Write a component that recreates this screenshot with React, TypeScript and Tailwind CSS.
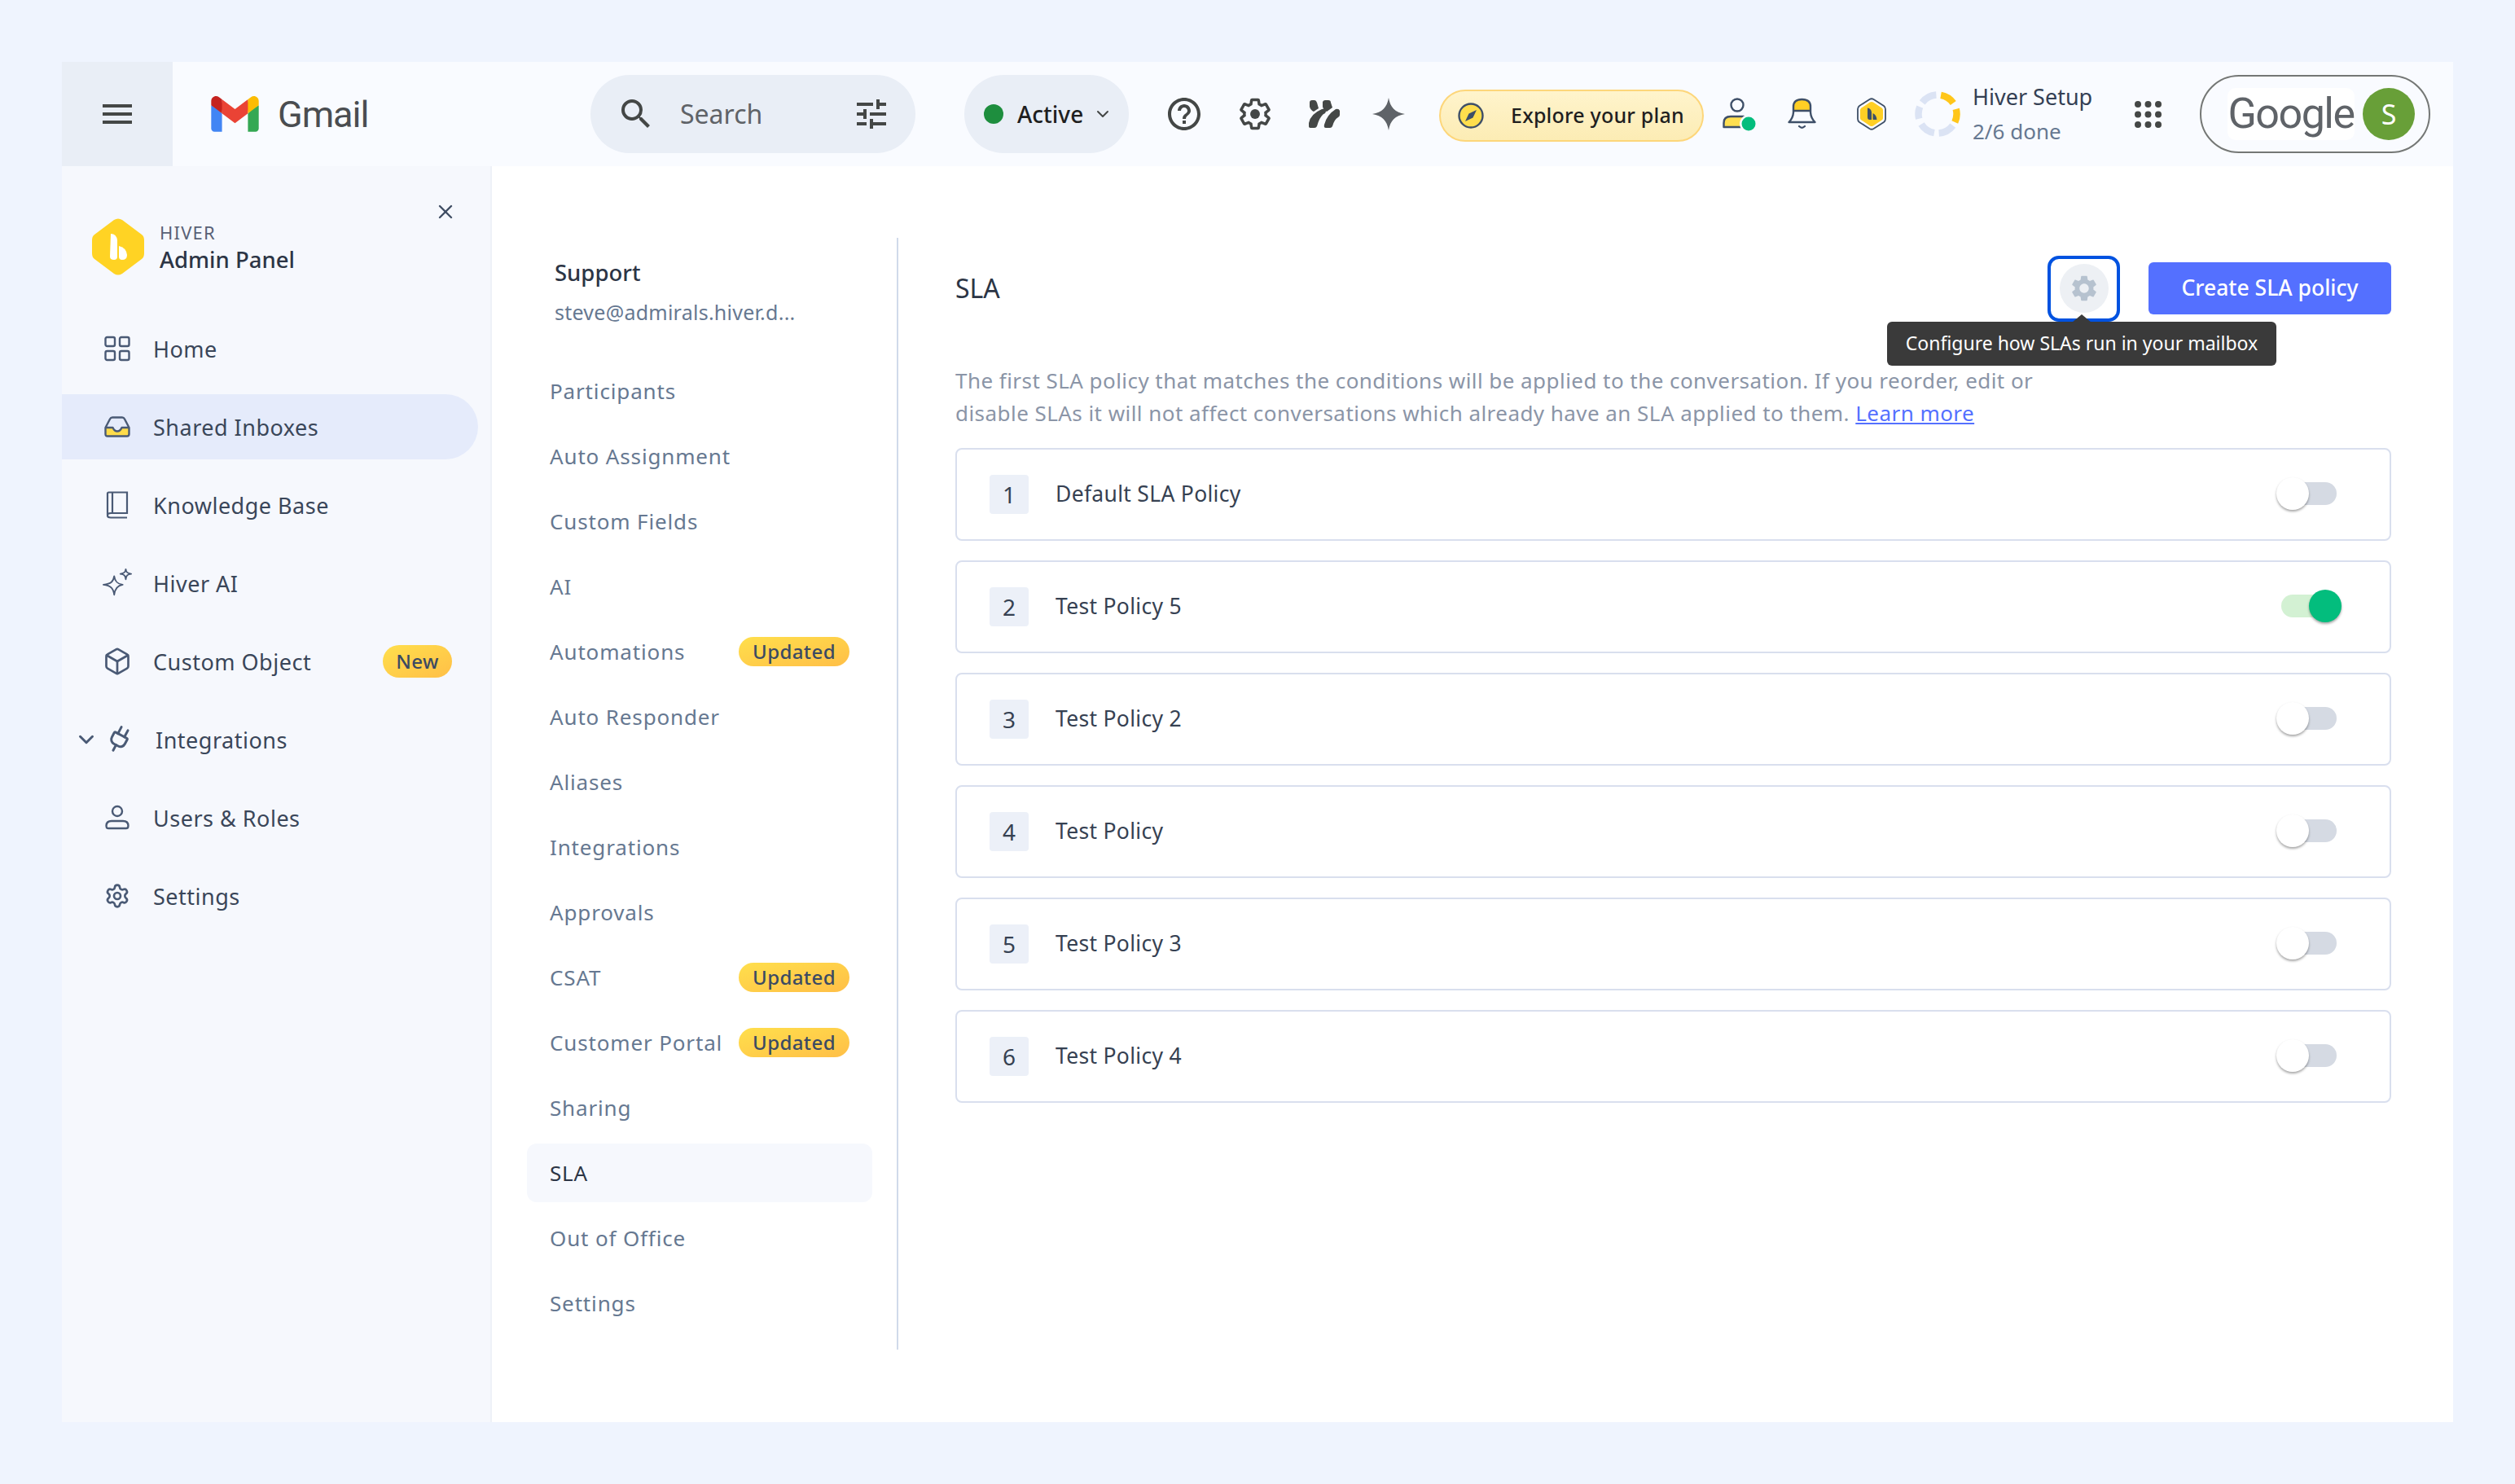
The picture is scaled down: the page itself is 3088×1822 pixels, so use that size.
import { Box, ChevronDown, Plug, Settings, X } from "lucide-react"
import { MdHelpOutline, MdSearch, MdSettings, MdTune } from "react-icons/md"

const font = "font-['Noto_Sans',sans-serif]"

const GEAR_PATH =
  "M19.43 12.98c.04-.32.07-.64.07-.98 0-.34-.03-.66-.07-.98l2.11-1.65c.19-.15.24-.42.12-.64l-2-3.46c-.09-.16-.26-.25-.44-.25-.06 0-.12.01-.17.03l-2.49 1c-.52-.4-1.08-.73-1.69-.98l-.38-2.65C14.46 2.18 14.25 2 14 2h-4c-.25 0-.46.18-.49.42l-.38 2.65c-.61.25-1.17.59-1.69.98l-2.49-1c-.06-.02-.12-.03-.18-.03-.17 0-.34.09-.43.25l-2 3.46c-.13.22-.07.49.12.64l2.11 1.65c-.04.32-.07.65-.07.98 0 .33.03.66.07.98l-2.11 1.65c-.19.15-.24.42-.12.64l2 3.46c.09.16.26.25.44.25.06 0 .12-.01.17-.03l2.49-1c.52.4 1.08.73 1.69.98l.38 2.65c.03.24.24.42.49.42h4c.25 0 .46-.18.49-.42l.38-2.65c.61-.25 1.17-.59 1.69-.98l2.49 1c.06.02.12.03.18.03.17 0 .34-.09.43-.25l2-3.46c.12-.22.07-.49-.12-.64l-2.11-1.65z"

function GmailLogo() {
  return (
    <svg viewBox="0 0 256 193" className="h-[44px] w-[59px]">
      <path fill="#4285F4" d="M58.182 192.05V93.14L27.507 65.077 0 49.504v125.091c0 9.658 7.825 17.455 17.455 17.455h40.727Z" />
      <path fill="#34A853" d="M197.818 192.05h40.727c9.659 0 17.455-7.826 17.455-17.455V49.505l-31.156 17.837-27.026 25.798v98.91Z" />
      <path fill="#EA4335" d="m58.182 93.14-4.174-38.647 4.174-36.989L128 69.868l69.818-52.364 4.669 34.992-4.669 40.644L128 145.504z" />
      <path fill="#FBBC04" d="M197.818 17.504V93.14L256 49.504V26.231c0-21.585-24.64-33.89-41.89-20.945l-16.292 12.218Z" />
      <path fill="#C5221F" d="m0 49.504 26.759 20.07L58.182 93.14V17.504L41.89 5.286C24.61-7.66 0 4.646 0 26.23v23.273Z" />
    </svg>
  )
}

function HiverLogo() {
  return (
    <svg viewBox="0 0 64 70" className="h-[70px] w-[64px]">
      <path fill="#ffd324" d="M27 2 Q32 -1 37 2 L61 20 Q64 22 64 27 L64 43 Q64 48 61 50 L37 68 Q32 71 27 68 L3 50 Q0 48 0 43 L0 27 Q0 22 3 20 Z" />
      <path fill="#fff" d="M23 19 Q30 19 31 27 L31 47 Q31 51 27 51 Q22 51 22 47 Z" />
      <path fill="#fff" d="M33 34 Q42 36 43 45 Q43 51 37 51 Q33 51 33 47 Z" />
    </svg>
  )
}

function Hamburger() {
  return (
    <svg viewBox="0 0 36 24" className="h-[24px] w-[36px]" fill="#444746">
      <rect width="36" height="4" />
      <rect y="10" width="36" height="4" />
      <rect y="20" width="36" height="4" />
    </svg>
  )
}

function HeaderGear() {
  return (
    <svg viewBox="0 0 24 24" className="h-[42px] w-[42px]">
      <path d={GEAR_PATH} fill="none" stroke="#444746" strokeWidth="2" />
      <circle cx="12" cy="12" r="3.4" fill="#444746" />
    </svg>
  )
}

function Petals() {
  return (
    <svg viewBox="0 0 38 34" className="h-[34px] w-[38px]" fill="#444746">
      <path d="M1 3 Q1 0 4 0 L7 0 Q9 0 10 3 L12 10 L6 14 Q2 12 1 8 Z" />
      <path d="M17 2 Q18 0 20 0 L24 0 Q27 0 27 3 L29 9 L22 14 Q18 12 17 8 Z" />
      <path d="M2 34 Q-1 34 0 28 Q2 17 16 11 Q20 10 21 13 Q21 16 18 17 Q13 21 10 32 Q9 34 7 34 Z" />
      <path d="M21 34 Q18 34 19 30 Q22 18 33 11 Q37 10 38 13 L38 18 Q38 20 36 21 Q31 24 29 32 Q28 34 26 34 Z" />
    </svg>
  )
}

function Sparkle() {
  return (
    <svg viewBox="0 0 40 40" className="h-[40px] w-[40px]" fill="#5f6368">
      <path d="M20 0 C22 12 28 18 40 20 C28 22 22 28 20 40 C18 28 12 22 0 20 C12 18 18 12 20 0 Z" />
    </svg>
  )
}

function Compass() {
  return (
    <svg viewBox="0 0 32 32" className="h-[32px] w-[32px]">
      <circle cx="16" cy="16" r="14.5" fill="#ffde4d" stroke="#3e4f68" strokeWidth="2.4" />
      <path d="M23 9 L18.5 18.5 L9 23 L13.5 13.5 Z" fill="#3e4f68" />
    </svg>
  )
}

function PersonStatus() {
  return (
    <svg viewBox="0 0 41 41" className="h-[41px] w-[41px]">
      <circle cx="18" cy="9" r="7.5" fill="none" stroke="#3e4f68" strokeWidth="2.4" />
      <path d="M1.5 36 L1.5 31 Q1.5 23 10 23 L26 23 L26 36 Z" fill="#ffdf50" stroke="#3e4f68" strokeWidth="2.4" strokeLinejoin="round" />
      <circle cx="32" cy="32" r="11" fill="#f9fbff" />
      <circle cx="32" cy="32" r="8.5" fill="#03bd7d" />
    </svg>
  )
}

function Bell() {
  return (
    <svg viewBox="0 0 35 40" className="h-[40px] w-[35px]">
      <path d="M7 16 L7 11 Q7 1 17.5 1 Q28 1 28 11 L28 16 Z" fill="#ffcf25" />
      <path
        d="M7 16 L7 11 Q7 2 17.5 2 Q28 2 28 11 L28 18 Q28.5 25 33.5 30 L1.5 30 Q6.5 25 7 18 Z M7 16 L28 16"
        fill="none"
        stroke="#3e4f68"
        strokeWidth="2.4"
        strokeLinejoin="round"
      />
      <path d="M14 35 Q17.5 38.5 21 35" fill="none" stroke="#3e4f68" strokeWidth="2.2" strokeLinecap="round" />
    </svg>
  )
}

function HiveBadge() {
  return (
    <svg viewBox="0 0 36 40" className="h-[40px] w-[36px]">
      <path d="M15.5 2 Q18 0.5 20.5 2 L33 10 Q35 11.5 35 14 L35 26 Q35 28.5 33 30 L20.5 38 Q18 39.5 15.5 38 L3 30 Q1 28.5 1 26 L1 14 Q1 11.5 3 10 Z" fill="#f9fbff" stroke="#3e4f68" strokeWidth="1.8" />
      <path d="M16 5.5 Q18 4.5 20 5.5 L30.5 12.5 Q32 13.5 32 15 L32 25 Q32 26.5 30.5 27.5 L20 34.5 Q18 35.5 16 34.5 L5.5 27.5 Q4 26.5 4 25 L4 15 Q4 13.5 5.5 12.5 Z" fill="#ffcf25" />
      <path d="M13 12.5 Q17.5 13 18 18 L18 27 L15.5 27 Q13 27 13 24 Z M19.5 19 Q24 21 24.5 27 L20 27 Q19.5 27 19.5 26 Z" fill="#3e4f68" />
    </svg>
  )
}

// one arc of the progress ring, angles in degrees clockwise from the top
function arcPath(from: number, to: number) {
  const r = 23.5
  const point = (deg: number) => {
    const rad = (deg * Math.PI) / 180
    return `${(28 + r * Math.sin(rad)).toFixed(2)} ${(28 - r * Math.cos(rad)).toFixed(2)}`
  }
  return `M${point(from)} A${r} ${r} 0 0 1 ${point(to)}`
}

function SetupRing() {
  const segments = [
    { from: 10, to: 55, color: "#ffc61a" },
    { from: 75, to: 115, color: "#ffc61a" },
    { from: 127, to: 176, color: "#dbe3f4" },
    { from: 190, to: 238, color: "#dbe3f4" },
    { from: 256, to: 292, color: "#dbe3f4" },
    { from: 307, to: 356, color: "#dbe3f4" },
  ]
  return (
    <svg viewBox="0 0 56 56" className="h-[56px] w-[56px]" fill="none" strokeWidth="8.5">
      {segments.map((s) => (
        <path key={s.from} d={arcPath(s.from, s.to)} stroke={s.color} />
      ))}
    </svg>
  )
}

function AppDots() {
  const spots = [4, 16.5, 29]
  return (
    <svg viewBox="0 0 33 33" className="h-[33px] w-[33px]" fill="#444746">
      {spots.flatMap((y) => spots.map((x) => <circle key={`${x}-${y}`} cx={x} cy={y} r="4" />))}
    </svg>
  )
}

function HomeIcon() {
  return (
    <svg viewBox="0 0 32 32" className="h-[32px] w-[32px]" fill="none" stroke="#4a5a75" strokeWidth="2.4">
      <rect x="1.5" y="2" width="11.5" height="11" rx="2" />
      <rect x="19" y="2" width="11.5" height="11" rx="2" />
      <rect x="1.5" y="19" width="11.5" height="11" rx="2" />
      <rect x="19" y="19" width="11.5" height="11" rx="2" />
    </svg>
  )
}

function InboxIcon() {
  return (
    <svg viewBox="0 0 32 26" className="h-[26px] w-[32px]">
      <path d="M2 14 L11 14 Q13 19 16 19 Q19 19 21 14 L30 14 L30 22 Q30 24.5 27.5 24.5 L4.5 24.5 Q2 24.5 2 22 Z" fill="#ffdc4a" />
      <path d="M1.5 14 L7 3.5 Q8 1.5 10 1.5 L22 1.5 Q24 1.5 25 3.5 L30.5 14 L30.5 22 Q30.5 24.5 28 24.5 L4 24.5 Q1.5 24.5 1.5 22 Z M2 14 L10.5 14 Q12.5 18.5 16 18.5 Q19.5 18.5 21.5 14 L30 14" fill="none" stroke="#4a5a75" strokeWidth="2.4" strokeLinejoin="round" />
    </svg>
  )
}

function BookIcon() {
  return (
    <svg viewBox="0 0 28 34" className="h-[34px] w-[28px]" fill="none" stroke="#4a5a75" strokeWidth="2.2">
      <path d="M2 29 L2 3 Q2 1.5 3.5 1.5 L26 1.5 L26 27 L6 27 Q2 27 2 30 Q2 32.5 6 32.5 L26 32.5" />
      <path d="M8 1.5 V27" />
    </svg>
  )
}

function AiIcon() {
  return (
    <svg viewBox="0 0 38 38" className="h-[38px] w-[38px]" fill="none" stroke="#4a5a75" strokeWidth="2" strokeLinejoin="round">
      <path d="M15 10 C16 17 19 20 26 21 C19 22 16 26 15 34 C14 26 11 22 1 21 C11 20 14 17 15 10 Z" />
      <path d="M30 1 C30.5 5 32 6.5 37 7 C32 7.5 30.5 9 30 14 C29.5 9 28 7.5 23 7 C28 6.5 29.5 5 30 1 Z" />
    </svg>
  )
}

function UsersIcon() {
  return (
    <svg viewBox="0 0 32 32" className="h-[32px] w-[32px]" fill="none" stroke="#4a5a75" strokeWidth="2.4">
      <circle cx="16" cy="8" r="6" />
      <path d="M5 29 Q2.5 29 2.5 26 Q2.5 20 9 20 L23 20 Q29.5 20 29.5 26 Q29.5 29 27 29 Z" />
    </svg>
  )
}

function Badge({ label, height }: { label: string; height: string }) {
  return (
    <span
      className={`flex items-center justify-center rounded-full bg-gradient-to-br from-[#ffdf4c] to-[#ffbf47] text-[24px] font-medium tracking-[0.4px] text-[#3b4a63] ${height}`}
    >
      {label}
    </span>
  )
}

const navItems = [
  { label: "Home", icon: <HomeIcon /> },
  { label: "Shared Inboxes", icon: <InboxIcon />, active: true },
  { label: "Knowledge Base", icon: <BookIcon /> },
  { label: "Hiver AI", icon: <AiIcon /> },
  { label: "Custom Object", icon: <Box size={36} strokeWidth={1.8} color="#4a5a75" />, badge: true },
]

const sections = [
  { label: "Participants" },
  { label: "Auto Assignment" },
  { label: "Custom Fields" },
  { label: "AI" },
  { label: "Automations", updated: true },
  { label: "Auto Responder" },
  { label: "Aliases" },
  { label: "Integrations" },
  { label: "Approvals" },
  { label: "CSAT", updated: true },
  { label: "Customer Portal", updated: true },
  { label: "Sharing" },
  { label: "SLA", active: true },
  { label: "Out of Office" },
  { label: "Settings" },
]

const policies = [
  { name: "Default SLA Policy", on: false },
  { name: "Test Policy 5", on: true },
  { name: "Test Policy 2", on: false },
  { name: "Test Policy", on: false },
  { name: "Test Policy 3", on: false },
  { name: "Test Policy 4", on: false },
]

function Toggle({ on }: { on: boolean }) {
  return (
    <div className={`relative mr-[65px] -mt-[2px] h-[28px] w-[68px] rounded-full ${on ? "bg-[#d3f1d3]" : "bg-[#d5dae3]"}`}>
      <div
        className={`absolute top-[-6px] h-[40px] w-[40px] rounded-full shadow-[0_2px_3px_rgba(0,0,0,0.35)] ${
          on ? "right-[-6px] bg-[#03bd7d]" : "left-[-6px] bg-white"
        }`}
      />
    </div>
  )
}

function Header() {
  return (
    <header className="flex h-[128px] items-center bg-[#f9fbff]">
      <div className="flex h-full w-[136px] items-center justify-center bg-[#e9eef6]">
        <Hamburger />
      </div>
      <div className="ml-[47px]">
        <GmailLogo />
      </div>
      <span className="ml-[23px] w-[384px] font-['Roboto',sans-serif] text-[45px] leading-none tracking-[-1px] text-[#4a4d50]">Gmail</span>

      <div className="flex h-[96px] w-[399px] items-center rounded-full bg-[#e9eef6] pl-[32px] pr-[30px]">
        <MdSearch size={48} color="#444746" />
        <span className="ml-[30px] flex-1 text-[32px] text-[#5f6368]">Search</span>
        <MdTune size={48} color="#444746" />
      </div>

      <div className="ml-[60px] flex h-[96px] w-[202px] items-center rounded-full bg-[#e9eef6] pl-[24px]">
        <span className="h-[24px] w-[24px] rounded-full bg-[#1e8e3e]" />
        <span className="ml-[17px] text-[28px] font-medium text-[#1f1f1f]">Active</span>
        <ChevronDown size={24} color="#444746" className="ml-[12px]" />
      </div>

      <MdHelpOutline size={48} color="#444746" className="ml-[44px]" />
      <div className="ml-[42px]">
        <HeaderGear />
      </div>
      <div className="ml-[45px]">
        <Petals />
      </div>
      <div className="ml-[40px]">
        <Sparkle />
      </div>

      <div className="ml-[42px] mt-[4px] flex h-[64px] w-[325px] items-center rounded-full border-2 border-[#fdd67a] bg-gradient-to-b from-[#fff4cc] to-[#fcecb4] pl-[21px]">
        <Compass />
        <span className="ml-[33px] text-[25px] font-medium tracking-[0.2px] text-[#1f1f1f]">Explore your plan</span>
      </div>

      <div className="ml-[23px]">
        <PersonStatus />
      </div>
      <div className="ml-[39px]">
        <Bell />
      </div>
      <div className="ml-[50px]">
        <HiveBadge />
      </div>
      <div className="ml-[35px]">
        <SetupRing />
      </div>
      <div className="ml-[15px] flex w-[199px] flex-col gap-[4px]">
        <span className="text-[27px] leading-[38px] text-[#344054]">Hiver Setup</span>
        <span className="text-[26px] leading-[38px] text-[#667891]">2/6 done</span>
      </div>

      <AppDots />

      <div className="ml-[47px] flex h-[96px] w-[283px] items-center rounded-full border-2 border-[#747775] pl-[32px]">
        <span className="flex h-[64px] w-[156px] items-center justify-center rounded-[10px] bg-white font-['Roboto',sans-serif] text-[52px] tracking-[-1.5px] text-[#5f6368]">
          Google
        </span>
        <span className="ml-[10px] flex h-[64px] w-[64px] items-center justify-center rounded-full bg-[#689f38] text-[34px] text-white">S</span>
      </div>
    </header>
  )
}

function Sidebar() {
  const rowText = "text-[27px] leading-[38px] pt-[1px] tracking-[0.5px] text-[#3a4659]"
  return (
    <aside className="flex w-[528px] flex-none flex-col border-r-2 border-[#eef1f8] bg-[#f6f8fd]">
      <div className="relative flex h-[184px] items-center pl-[37px] pt-[14px]">
        <HiverLogo />
        <div className="ml-[19px] flex flex-col">
          <span className="mt-[2px] text-[22px] leading-[30px] tracking-[1.2px] text-[#586176]">HIVER</span>
          <span className="text-[27.5px] leading-[38px] font-medium text-[#2c3545]">Admin Panel</span>
        </div>
        <X size={28} color="#3f4d63" strokeWidth={2} className="absolute top-[42px] left-[457px]" />
      </div>

      <nav className="flex flex-col gap-[16px]">
        {navItems.map((item) => (
          <div
            key={item.label}
            className={`flex h-[80px] w-[511px] items-center rounded-r-full ${item.active ? "bg-[#e5ebfb]" : ""}`}
          >
            <span className="ml-[50px] flex w-[36px] justify-center">{item.icon}</span>
            <span className={`ml-[26px] flex-1 ${rowText}`}>{item.label}</span>
            {item.badge && (
              <span className="mr-[32px] w-[85px]">
                <Badge label="New" height="h-[40px]" />
              </span>
            )}
          </div>
        ))}
        <div className="flex h-[80px] items-center">
          <ChevronDown size={30} strokeWidth={2.4} color="#4a5a75" className="ml-[15px]" />
          <Plug size={36} strokeWidth={2} color="#4a5a75" className="ml-[7px] rotate-[28deg]" />
          <span className={`ml-[27px] ${rowText}`}>Integrations</span>
        </div>
        <div className="flex h-[80px] items-center">
          <span className="ml-[50px] flex w-[36px] justify-center">
            <UsersIcon />
          </span>
          <span className={`ml-[26px] ${rowText}`}>Users &amp; Roles</span>
        </div>
        <div className="flex h-[80px] items-center">
          <span className="ml-[50px] flex w-[36px] justify-center">
            <Settings size={32} strokeWidth={2} color="#4a5a75" />
          </span>
          <span className={`ml-[26px] ${rowText}`}>Settings</span>
        </div>
      </nav>
    </aside>
  )
}

function SectionList() {
  return (
    <div className="mt-[88px] h-[1365px] w-[499px] flex-none border-r-2 border-[#d0daea]">
      <div className="pl-[77px] pt-[24px]">
        <div className="text-[27.5px] leading-[38px] font-medium text-[#2c3545]">Support</div>
        <div className="mt-[10px] text-[25px] leading-[38px] tracking-[0.25px] text-[#667891]">steve@admirals.hiver.d...</div>
      </div>
      <div className="mt-[42px] flex flex-col gap-[8px] pl-[43px]">
        {sections.map((s) => (
          <div
            key={s.label}
            className={`flex h-[72px] w-[424px] items-center rounded-[12px] pl-[28px] ${s.active ? "bg-[#f6f8fd]" : ""}`}
          >
            <span className={`flex-1 text-[26px] tracking-[0.85px] ${s.active ? "text-[#2c3545]" : "text-[#667891]"}`}>{s.label}</span>
            {s.updated && (
              <span className="mr-[28px] w-[136px]">
                <Badge label="Updated" height="h-[36px]" />
              </span>
            )}
          </div>
        ))}
      </div>
    </div>
  )
}

function SlaPanel() {
  return (
    <main className="flex-1 pl-[70px] pr-[76px] pt-[118px]">
      <div className="flex h-[64px] items-center">
        <h1 className="flex-1 text-[32px] text-[#2c3545]">SLA</h1>
        <div className="relative mr-[35px] flex h-[81px] w-[89px] items-center justify-center rounded-[14px] border-[4px] border-[#0052e0]">
          <span className="flex h-[60px] w-[60px] items-center justify-center rounded-full bg-[#edf0f4]">
            <MdSettings size={38} color="#b6c2cf" />
          </span>
          <div className="absolute left-[-201px] top-[77px] z-10 flex h-[54px] w-[478px] items-center justify-center rounded-[6px] bg-[#3a3a3a] text-[23px] whitespace-nowrap text-white">
            Configure how SLAs run in your mailbox
            <span className="absolute top-[-9px] left-1/2 h-0 w-0 -translate-x-1/2 border-x-[12px] border-b-[10px] border-x-transparent border-b-[#3a3a3a]" />
          </div>
        </div>
        <button type="button" className="h-[64px] w-[298px] rounded-[6px] bg-[#5470ff] text-[26.5px] font-medium text-white">
          Create SLA policy
        </button>
      </div>

      <p className="mt-[61px] text-[26px] leading-[40px] tracking-[0.45px] text-[#8b95a7]">
        The first SLA policy that matches the conditions will be applied to the conversation. If you reorder, edit or
        <br />
        disable SLAs it will not affect conversations which already have an SLA applied to them.{" "}
        <a className="text-[#5470ff] underline">Learn more</a>
      </p>

      <div className="mt-[23px] flex flex-col gap-[24px]">
        {policies.map((p, i) => (
          <div key={p.name} className="flex h-[114px] items-center justify-between rounded-[8px] border-2 border-[#d9dfee] bg-white pl-[40px]">
            <div className="flex items-center">
              <span className="flex h-[48px] w-[48px] items-center justify-center rounded-[4px] bg-[#ecf0f8] text-[28px] text-[#364152]">{i + 1}</span>
              <span className="ml-[33px] text-[26.5px] tracking-[0.3px] text-[#364152]">{p.name}</span>
            </div>
            <Toggle on={p.on} />
          </div>
        ))}
      </div>
    </main>
  )
}

export default function App() {
  return (
    <div className={`h-[1822px] w-[3088px] overflow-hidden bg-[#eff4fe] pl-[76px] pt-[76px] ${font}`}>
      <div className="flex h-[1670px] w-[2936px] flex-col">
        <Header />
        <div className="flex flex-1 bg-white">
          <Sidebar />
          <SectionList />
          <SlaPanel />
        </div>
      </div>
    </div>
  )
}
